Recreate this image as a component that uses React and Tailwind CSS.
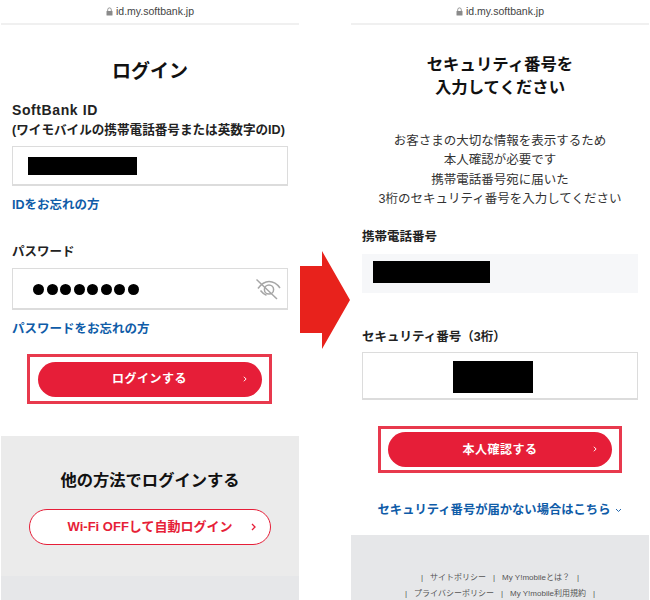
import React from 'react';

const FONT = "font-['Liberation_Sans','Noto_Sans_CJK_JP',sans-serif]";

function Chevron({ className = 'text-white', size = 'small' }) {
  const w = size === 'small' ? 4 : 5;
  const h = size === 'small' ? 6 : 8;
  return (
    <svg width={w} height={h} viewBox="0 0 5 8" fill="none" stroke="currentColor" strokeWidth="1.3" className={className}>
      <path d="M1 1 4 4 1 7" />
    </svg>
  );
}

function UrlBar() {
  return (
    <div className="h-[25px] shrink-0 border-b-2 border-[#f0f0f0] flex items-center justify-center gap-[3px] text-[10.5px] text-[#444]">
      <svg width="7" height="9" viewBox="0 0 7 9" className="text-[#8a8a8a]" fill="none" stroke="currentColor">
        <path d="M1.7 4V2.7a1.8 1.8 0 0 1 3.6 0V4" strokeWidth="0.9" />
        <rect x="0.5" y="4" width="6" height="4.6" rx="0.5" fill="currentColor" stroke="none" />
      </svg>
      <span>id.my.softbank.jp</span>
    </div>
  );
}

function EyeOff() {
  return (
    <svg width="26" height="22" viewBox="0 0 26 22" fill="none" stroke="#a6a6a6" strokeWidth="1.5">
      <path d="M3 10.5C7 5 11 3.5 14 3.5c4 0 8 2.2 11 6.5" />
      <path d="M5.5 12.5c2 2.6 4 4 6 4.8" />
      <circle cx="14" cy="11.5" r="4.6" />
      <path d="M1.5 1.5 22 21" />
    </svg>
  );
}

function RedButton({ label, boxClass }) {
  return (
    <div className={`border-[3px] border-[#e8394d] flex items-center justify-center ${boxClass}`}>
      <div className="w-[224px] h-[35px] rounded-full bg-[#e61e38] relative flex items-center justify-center text-white text-[12px] font-bold tracking-[0.5px]">
        {label}
        <span className="absolute right-[15px] top-[14px] flex">
          <Chevron />
        </span>
      </div>
    </div>
  );
}

function LoginPanel() {
  return (
    <div className="w-[298px] ml-[1px] shrink-0 flex flex-col h-full">
      <UrlBar />
      <div className="px-[11px]">
        <h1 className="mt-[32px] h-[30px] leading-[30px] text-center text-[19px] font-bold text-[#111]">ログイン</h1>
        <p className="mt-[13px] leading-[20px] text-[14px] font-bold text-[#222] tracking-[0.6px]">SoftBank ID</p>
        <p className="leading-[20px] text-[12.6px] font-bold text-[#222] whitespace-nowrap">(ワイモバイルの携帯電話番号または英数字のID)</p>
        <div className="mt-[6px] h-[40px] border border-[#dcdcdc] border-b-2 pl-[15px] flex items-center">
          <div className="w-[109px] h-[18px] bg-black" />
        </div>
        <a className="block mt-[9px] leading-[20px] text-[12.5px] font-semibold text-[#0f5ca8]">IDをお忘れの方</a>
        <p className="mt-[27px] leading-[20px] text-[12.5px] font-bold text-[#222]">パスワード</p>
        <div className="mt-[6px] h-[42px] border border-[#dcdcdc] border-b-2 pl-[20px] pr-[6px] pt-[1px] flex items-center justify-between">
          <div className="flex gap-[2.5px]">
            {[0, 1, 2, 3, 4, 5, 6, 7].map((i) => (
              <span key={i} className="w-[11px] h-[11px] rounded-full bg-black" />
            ))}
          </div>
          <EyeOff />
        </div>
        <a className="block mt-[9px] leading-[20px] text-[12.5px] font-semibold text-[#0f5ca8]">パスワードをお忘れの方</a>
        <RedButton label="ログインする" boxClass="mt-[15px] ml-[15px] w-[245px] h-[50px]" />
      </div>
      <div className="mt-[32px] flex-1 bg-[#ebebeb] flex flex-col">
        <h2 className="pt-[31px] leading-[26px] box-content text-center text-[16.3px] font-bold text-[#111]">他の方法でログインする</h2>
        <div className="mt-[16px] mx-auto w-[242px] h-[36px] rounded-full bg-white border border-[#e61e38] relative flex items-center justify-center text-[13px] font-bold text-[#e61e38]">
          Wi-Fi OFFして自動ログイン
          <span className="absolute right-[14px] top-[13px] flex">
            <Chevron className="text-[#e61e38]" size="large" />
          </span>
        </div>
        <div className="mt-[31px] flex-1 bg-[#e6e7e9]" />
      </div>
    </div>
  );
}

function SecurityPanel() {
  return (
    <div className="w-[298px] shrink-0 flex flex-col h-full">
      <UrlBar />
      <div className="px-[11px]">
        <h1 className="mt-[28px] leading-[23px] text-center text-[16.4px] font-bold text-[#111]">
          セキュリティ番号を<br />入力してください
        </h1>
        <p className="mt-[33px] h-[78px] leading-[19.4px] text-center text-[12.5px] text-[#333] whitespace-nowrap">
          お客さまの大切な情報を表示するため<br />
          本人確認が必要です<br />
          携帯電話番号宛に届いた<br />
          3桁のセキュリティ番号を入力してください
        </p>
        <p className="mt-[17px] leading-[20px] text-[12.5px] font-bold text-[#222]">携帯電話番号</p>
        <div className="mt-[7px] h-[39px] bg-[#f6f7f9] pl-[11px] pb-[3px] flex items-center">
          <div className="w-[117px] h-[22px] bg-black" />
        </div>
        <p className="mt-[34px] leading-[20px] text-[12.5px] font-bold text-[#222]">セキュリティ番号（3桁）</p>
        <div className="mt-[5px] h-[48px] border border-[#dcdcdc] border-b-2 pt-[3px] pr-[14px] flex items-center justify-center">
          <div className="w-[80px] h-[32px] bg-black" />
        </div>
        <RedButton label="本人確認する" boxClass="mt-[26px] ml-[16px] w-[244px] h-[47px]" />
        <a className="mt-[27px] leading-[20px] flex items-center justify-center gap-[5px] text-[12.3px] font-semibold text-[#0f5ca8] whitespace-nowrap">
          セキュリティ番号が届かない場合はこちら
          <svg width="7" height="5" viewBox="0 0 8 6" fill="none" stroke="currentColor" strokeWidth="1.1">
            <path d="M1 1.2 4 4.2 7 1.2" />
          </svg>
        </a>
      </div>
      <div className="mt-[15px] flex-1 min-h-0 overflow-hidden bg-[#e6e7e9] pt-[35px] text-[8px] leading-[16px] text-[#555] text-center whitespace-nowrap">
        <p className="flex justify-center gap-[7px]"><span>|</span><span>サイトポリシー</span><span>|</span><span>My Y!mobileとは？</span><span>|</span></p>
        <p className="flex justify-center gap-[7px]"><span>|</span><span>プライバシーポリシー</span><span>|</span><span>My Y!mobile利用規約</span><span>|</span></p>
      </div>
    </div>
  );
}

export default function App() {
  return (
    <div className={`w-[650px] h-[600px] overflow-hidden bg-white flex ${FONT}`}>
      <LoginPanel />
      <div className="w-[52px] shrink-0 pt-[251px]">
        <svg width="52" height="98" viewBox="0 0 52 98" className="block">
          <path d="M1 15H23V0L51 49 23 98V82H1Z" fill="#e8221c" />
        </svg>
      </div>
      <SecurityPanel />
    </div>
  );
}
